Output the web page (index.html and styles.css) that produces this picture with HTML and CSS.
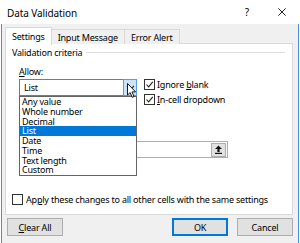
FILE: index.html
```html
<!DOCTYPE html>
<html>
<head>
<meta charset="utf-8">
<title>Data Validation</title>
<link rel="stylesheet" href="styles.css">
</head>
<body>
<div class="window">
  <div class="titlebar">
    <span class="title">Data Validation</span>
    <span class="help">?</span>
    <svg class="close" width="8" height="8" viewBox="0 0 8 8"><path d="M0.4 0.4 L7.6 7.6 M7.6 0.4 L0.4 7.6" stroke="#222" stroke-width="1" fill="none"/></svg>
  </div>
  <div class="frame">
    <div class="tabs">
      <div class="tab active">Settings</div>
      <div class="tab">Input Message</div>
      <div class="tab">Error Alert</div>
    </div>
    <div class="panel">
      <div class="group"><span class="legend">Validation criteria</span><span class="rule"></span></div>
      <div class="field-label"><u>A</u>llow:</div>
      <div class="allow-row">
        <div class="combo">
          <span class="combo-text">List</span>
          <span class="combo-btn"><svg width="9" height="6" viewBox="0 0 9 6"><path d="M1 1 L4.5 4.5 L8 1" stroke="#333" stroke-width="1.1" fill="none"/></svg></span>
        </div>
        <div class="checks">
          <div class="check"><span class="box"><svg width="9" height="9" viewBox="0 0 9 9"><path d="M1.5 4.5 L3.6 6.8 L7.8 1.8" stroke="#222" stroke-width="1.1" fill="none"/></svg></span><span>Ignore <u>b</u>lank</span></div>
          <div class="check"><span class="box"><svg width="9" height="9" viewBox="0 0 9 9"><path d="M1.5 4.5 L3.6 6.8 L7.8 1.8" stroke="#222" stroke-width="1.1" fill="none"/></svg></span><span><u>I</u>n-cell dropdown</span></div>
        </div>
      </div>
      <div class="source-row">
        <div class="source"><span class="ref-btn"><svg width="9" height="9" viewBox="0 0 9 9"><path d="M4.5 0.5 L8 4 L5.6 4 L5.6 7 L3.4 7 L3.4 4 L1 4 Z" fill="#111"/><rect x="1" y="7.8" width="7" height="1.2" fill="#111"/></svg></span></div>
      </div>
      <div class="check apply"><span class="box"></span><span>Ap<u>p</u>ly these changes to all other cells with the same settings</span></div>

      <ul class="dropdown">
        <li>Any value</li>
        <li>Whole number</li>
        <li>Decimal</li>
        <li class="selected">List</li>
        <li>Date</li>
        <li>Time</li>
        <li>Text length</li>
        <li>Custom</li>
      </ul>
      <svg class="cursor" width="10" height="16" viewBox="0 0 10 16"><path d="M0.5 0.5 L0.5 12 L3.2 9.6 L5.2 14.3 L7 13.5 L5 8.9 L8.6 8.9 Z" fill="#fff" stroke="#000" stroke-width="0.9" stroke-linejoin="round"/></svg>
    </div>
    <div class="buttons">
      <button class="btn"><u>C</u>lear All</button>
      <span class="spacer"></span>
      <button class="btn default">OK</button>
      <button class="btn">Cancel</button>
    </div>
  </div>
</div>
</body>
</html>
```

FILE: styles.css
```css
* { box-sizing: border-box; }
html, body { margin: 0; padding: 0; }
body {
  width: 300px;
  height: 243px;
  overflow: hidden;
  background: #fff;
  font-family: "Noto Sans", "Open Sans", sans-serif;
  font-size: 9px;
  letter-spacing: -0.2px;
  color: #000;
}
.window {
  width: 300px;
  height: 243px;
  display: flex;
  flex-direction: column;
}
.titlebar {
  height: 24px;
  flex: none;
  background: #fff;
  display: flex;
  align-items: center;
  padding-left: 7px;
  padding-right: 14px;
}
.title { font-size: 10px; letter-spacing: -0.1px; flex: 1; padding-top: 1px; }
.help { font-size: 10px; margin-right: 29px; }
.close { display: block; }
.frame {
  flex: 1;
  margin: 0 1px;
  border-left: 1px solid #4a90d9;
  border-right: 1px solid #4a90d9;
  background: #f0f0f0;
  padding: 3px 5px 0 3px;
  display: flex;
  flex-direction: column;
}
.tabs {
  display: flex;
  height: 17px;
  align-items: flex-end;
  margin-bottom: -1px;
  position: relative;
  z-index: 1;
}
.tab {
  height: 15px;
  border: 1px solid #d9d9d9;
  border-bottom: none;
  background: #f0f0f0;
  padding: 0 6px;
  display: flex;
  align-items: center;
  margin-left: -1px;
}
.tab.active {
  height: 18px;
  background: #fff;
  border-color: #d9d9d9;
  padding: 0 6px 1px 6px;
  margin-left: 0;
  margin-bottom: -1px;
}
.panel {
  position: relative;
  background: #fff;
  border: 1px solid #d9d9d9;
  height: 172px;
  padding: 2px 6px 0 6px;
}
.group {
  display: flex;
  align-items: center;
  height: 13px;
}
.legend { padding-right: 4px; }
.rule { flex: 1; border-top: 1px solid #dcdcdc; margin-right: 1px; }
.field-label { margin: 8px 0 0 7px; line-height: 10px; }
.allow-row {
  display: flex;
  margin-top: 2px;
  padding-left: 7px;
}
.combo {
  width: 118px;
  height: 17px;
  border: 1px solid #7a7a7a;
  display: flex;
  align-items: center;
  padding-left: 4px;
}
.combo-text { flex: 1; }
.combo-btn {
  width: 14px;
  height: 17px;
  margin: -1px -1px -1px 0;
  border: 1px solid #569de5;
  background: #cce4f7;
  display: flex;
  align-items: center;
  justify-content: center;
}
.combo-btn svg { display: block; }
.checks {
  display: flex;
  flex-direction: column;
  gap: 4px;
  margin-left: 7px;
}
.check {
  display: flex;
  align-items: center;
  gap: 2px;
  height: 11px;
}
.box {
  width: 11px;
  height: 11px;
  border: 1px solid #333;
  background: #fff;
  display: flex;
  align-items: center;
  justify-content: center;
  flex: none;
}
.box svg { display: block; }
.source-row {
  display: flex;
  justify-content: flex-end;
  margin-top: 36px;
  padding-right: 58px;
}
.source {
  width: 96px;
  height: 17px;
  border: 1px solid #adadad;
  display: flex;
  justify-content: flex-end;
  align-items: center;
  padding-right: 1px;
}
.ref-btn {
  width: 15px;
  height: 14px;
  background: #e1e1e1;
  border: 1px solid #adadad;
  display: flex;
  align-items: center;
  justify-content: center;
}
.ref-btn svg { display: block; }
.apply { margin-top: 36px; gap: 3px; }
.dropdown {
  position: absolute;
  left: 13px;
  top: 52px;
  width: 118px;
  margin: 0;
  padding: 0;
  list-style: none;
  border: 1px solid #646464;
  background: #fff;
}
.dropdown li {
  height: 9.75px;
  line-height: 9.75px;
  padding-left: 2px;
}
.dropdown li.selected {
  background: #0078d7;
  color: #fff;
}
.cursor {
  position: absolute;
  left: 121px;
  top: 39px;
}
.buttons {
  display: flex;
  align-items: center;
  margin-top: 3px;
  gap: 9px;
  padding-left: 2px;
}
.spacer { flex: 1; }
.btn {
  font: inherit;
  letter-spacing: inherit;
  width: 56px;
  height: 18px;
  background: #e1e1e1;
  border: 1px solid #adadad;
  padding: 0;
  color: #000;
}
.btn.default { border: 1px solid #0078d7; box-shadow: inset 0 0 0 1px #0078d7; }
```
